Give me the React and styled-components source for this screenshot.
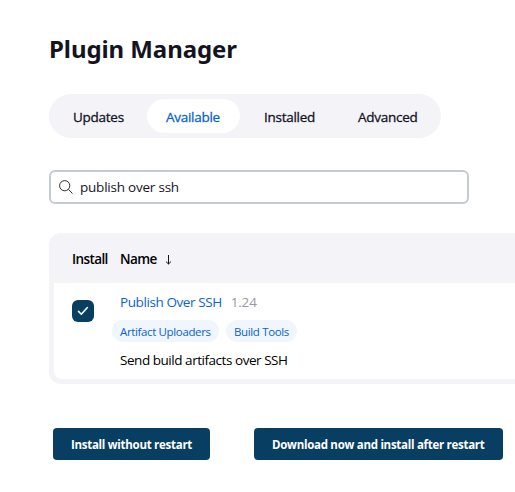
import React from "react";
import styled, { createGlobalStyle } from "styled-components";

const GlobalStyle = createGlobalStyle`
  * { box-sizing: border-box; }
  body {
    margin: 0;
    background: #fff;
    color: #14141f;
    font-family: "Open Sans", "Noto Sans", sans-serif;
    font-size: 13.5px;
    overflow: hidden;
  }
`;

const Page = styled.main`
  width: 515px;
  height: 492px;
  padding: 33px 0 0 49px;
  overflow: hidden;
`;

const Title = styled.h1`
  margin: 0;
  height: 61px;
  font: 700 24px/32px "Noto Sans", sans-serif;
  letter-spacing: -0.08px;
  white-space: nowrap;
`;

const TabBar = styled.nav`
  display: flex;
  gap: 5px;
  width: 392px;
  height: 44px;
  padding: 5px;
  border-radius: 22px;
  background: #f3f3f8;
`;

const Tab = styled.a`
  width: ${(p) => p.$width}px;
  height: 34px;
  padding-left: 19px;
  border-radius: 17px;
  line-height: 36px;
  letter-spacing: -0.27px;
  white-space: nowrap;
  -webkit-text-stroke: 0.3px currentColor;
  color: ${(p) => (p.$active ? "#0b63ce" : "#14141f")};
  background: ${(p) => (p.$active ? "#fff" : "transparent")};
`;

const SearchField = styled.label`
  display: flex;
  align-items: center;
  width: 420px;
  height: 34px;
  margin-top: 32px;
  padding-left: 8px;
  gap: 7px;
  border: 2px solid #c3ccd1;
  border-radius: 6px;
`;

const SearchText = styled.span`
  line-height: 30px;
  letter-spacing: -0.22px;
`;

const PluginTable = styled.section`
  width: 480px;
  height: 151px;
  margin-top: 29px;
  padding: 0 5px 5px;
  border-radius: 12px;
  background: #f3f3f8;
`;

const HeaderRow = styled.div`
  display: grid;
  grid-template-columns: 48px 1fr;
  height: 50px;
  padding-left: 18px;
  line-height: 53px;
  font-weight: 600;
  color: #000;
  letter-spacing: -0.6px;
`;

const NameHeading = styled.div`
  display: flex;
  align-items: center;
  gap: 8px;
  height: 53px;
`;

const PluginRow = styled.div`
  display: grid;
  grid-template-columns: 66px 1fr;
  height: 96px;
  border-radius: 0 0 8px 8px;
  background: #fff;
`;

const Checkbox = styled.span`
  display: grid;
  place-items: center;
  width: 22px;
  height: 22px;
  margin: 17px 0 0 18px;
  border-radius: 6px;
  background: #073e61;
`;

const Details = styled.div`
  padding-top: 8px;
`;

const NameLine = styled.div`
  display: flex;
  gap: 9px;
  height: 22px;
  line-height: 22px;
  white-space: nowrap;
`;

const PluginLink = styled.a`
  color: #0b63ce;
  letter-spacing: -0.41px;
`;

const Version = styled.span`
  color: #9999a1;
  letter-spacing: -0.2px;
`;

const TagList = styled.div`
  display: flex;
  gap: 7px;
  height: 22px;
  margin: 7px 0 0 -8px;
`;

const Tag = styled.a`
  width: ${(p) => p.$width}px;
  height: 22px;
  padding-left: 8px;
  border-radius: 11px;
  background: #f0f6fe;
  color: #0b63ce;
  font-size: 11.5px;
  line-height: 23px;
  letter-spacing: -0.36px;
  white-space: nowrap;
`;

const Description = styled.p`
  margin: 7px 0 0;
  color: #000;
  line-height: 22px;
  letter-spacing: -0.46px;
`;

const Actions = styled.div`
  display: flex;
  gap: 44px;
  margin: 44px 0 0 4px;
`;

const Button = styled.button`
  flex: none;
  width: ${(p) => p.$width}px;
  height: 32px;
  padding: 0 0 0 18px;
  border: 0;
  border-radius: 4px;
  background: #073e61;
  color: #fff;
  font: 700 11.5px/33px "Open Sans", sans-serif;
  letter-spacing: -0.28px;
  text-align: left;
  white-space: nowrap;
`;

const tabs = [
  { label: "Updates", width: 88 },
  { label: "Available", width: 93, active: true },
  { label: "Installed", width: 89 },
  { label: "Advanced", width: 97 },
];

export default function App() {
  return (
    <Page>
      <GlobalStyle />
      <Title>Plugin Manager</Title>
      <TabBar>
        {tabs.map((t) => (
          <Tab key={t.label} $width={t.width} $active={t.active}>
            {t.label}
          </Tab>
        ))}
      </TabBar>
      <SearchField>
        <svg width="14" height="14" viewBox="0 0 14 14" fill="none" stroke="#14141f" strokeWidth="0.9">
          <circle cx="5.7" cy="5.7" r="5.1" />
          <path d="M9.4 9.4 13.5 13.5" />
        </svg>
        <SearchText>publish over ssh</SearchText>
      </SearchField>
      <PluginTable>
        <HeaderRow>
          <span>Install</span>
          <NameHeading>
            Name
            <svg width="7" height="10" viewBox="0 0 7 10" fill="none" stroke="#14141f">
              <path d="M3.5 0V9M1 6.6 3.5 9 6 6.6" />
            </svg>
          </NameHeading>
        </HeaderRow>
        <PluginRow>
          <Checkbox>
            <svg width="12" height="10" viewBox="0 0 12 10" fill="none" stroke="#fff" strokeWidth="1.6" strokeLinecap="round" strokeLinejoin="round">
              <path d="M1.5 5.4 4.3 8.2 10.4 1.5" />
            </svg>
          </Checkbox>
          <Details>
            <NameLine>
              <PluginLink>Publish Over SSH</PluginLink>
              <Version>1.24</Version>
            </NameLine>
            <TagList>
              <Tag $width={107}>Artifact Uploaders</Tag>
              <Tag $width={71}>Build Tools</Tag>
            </TagList>
            <Description>Send build artifacts over SSH</Description>
          </Details>
        </PluginRow>
      </PluginTable>
      <Actions>
        <Button $width={157}>Install without restart</Button>
        <Button $width={249}>Download now and install after restart</Button>
      </Actions>
    </Page>
  );
}
